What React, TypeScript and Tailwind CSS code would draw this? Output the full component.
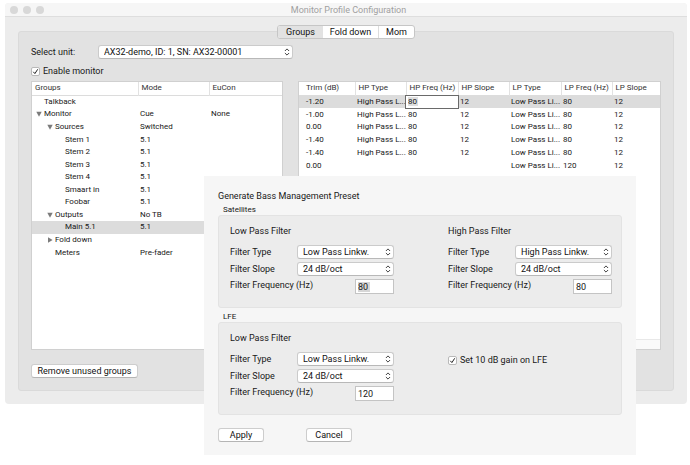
import type { ReactNode } from 'react'

type GroupRow = {
  name: string
  depth: number
  mode?: string
  eucon?: string
  arrow?: 'open' | 'closed'
  selected?: boolean
}

const GROUP_ROWS: GroupRow[] = [
  { name: 'Talkback', depth: 0 },
  { name: 'Monitor', depth: 0, mode: 'Cue', eucon: 'None', arrow: 'open' },
  { name: 'Sources', depth: 1, mode: 'Switched', arrow: 'open' },
  { name: 'Stem 1', depth: 2, mode: '5.1' },
  { name: 'Stem 2', depth: 2, mode: '5.1' },
  { name: 'Stem 3', depth: 2, mode: '5.1' },
  { name: 'Stem 4', depth: 2, mode: '5.1' },
  { name: 'Smaart in', depth: 2, mode: '5.1' },
  { name: 'Foobar', depth: 2, mode: '5.1' },
  { name: 'Outputs', depth: 1, mode: 'No TB', arrow: 'open' },
  { name: 'Main 5.1', depth: 2, mode: '5.1', selected: true },
  { name: 'Fold down', depth: 1, arrow: 'closed' },
  { name: 'Meters', depth: 1, mode: 'Pre-fader' },
]

const INDENT = ['pl-[4px]', 'pl-[15px]', 'pl-[25px]']

const CHANNEL_HEADERS = [
  'Trim (dB)',
  'HP Type',
  'HP Freq (Hz)',
  'HP Slope',
  'LP Type',
  'LP Freq (Hz)',
  'LP Slope',
]

const CHANNEL_ROWS = [
  ['-1.20', 'High Pass L...', '80', '12', 'Low Pass Li...', '80', '12'],
  ['-1.00', 'High Pass L...', '80', '12', 'Low Pass Li...', '80', '12'],
  ['0.00', 'High Pass L...', '80', '12', 'Low Pass Li...', '80', '12'],
  ['-1.40', 'High Pass L...', '80', '12', 'Low Pass Li...', '80', '12'],
  ['-1.40', 'High Pass L...', '80', '12', 'Low Pass Li...', '80', '12'],
  ['0.00', '', '', '', 'Low Pass Li...', '120', '12'],
]

function Arrow({ kind }: { kind?: 'open' | 'closed' }) {
  return (
    <svg viewBox="0 0 6 6" className="size-[6px] shrink-0 fill-[#7b7b7b]" aria-hidden="true">
      {kind === 'open' && <path d="M0.3 0.8h5.4L3 5.8z" />}
      {kind === 'closed' && <path d="M1 0.3v5.4L5.6 3z" />}
    </svg>
  )
}

function Select({ id, value, className }: { id: string; value: string; className: string }) {
  return (
    <div className={`relative shrink-0 ${className}`}>
      <select
        id={id}
        defaultValue={value}
        className="block h-[14px] w-full appearance-none rounded-[3px] border border-[#cbcbcb] border-b-[#b8b8b8] bg-white pr-4 pl-[5px] leading-[12px] text-[#111]"
      >
        <option>{value}</option>
      </select>
      <svg
        viewBox="0 0 6 8"
        className="pointer-events-none absolute top-[3px] right-[3px] h-2 w-[6px] fill-none stroke-[#444]"
        aria-hidden="true"
      >
        <path d="M0.9 3L3 0.9L5.1 3M0.9 5L3 7.1L5.1 5" />
      </svg>
    </div>
  )
}

function Checkbox({ id, children }: { id: string; children: ReactNode }) {
  return (
    <div className="flex items-center gap-[3px]">
      <span className="relative size-[9px]">
        <input
          id={id}
          type="checkbox"
          defaultChecked
          className="peer block size-[9px] appearance-none rounded-[2px] border border-[#b9b9b9] bg-white"
        />
        <svg
          viewBox="0 0 9 9"
          className="pointer-events-none absolute inset-0 hidden size-[9px] fill-none stroke-[#222] peer-checked:block"
          aria-hidden="true"
        >
          <path d="M2.3 4.8L3.9 6.6L6.7 2.3" />
        </svg>
      </span>
      <label htmlFor={id}>{children}</label>
    </div>
  )
}

function Button({ className, children }: { className: string; children: ReactNode }) {
  return (
    <button
      type="button"
      className={`h-[14px] rounded-[3px] border border-[#cdcdcd] border-b-[#b5b5b5] bg-white leading-[12px] text-[#111] ${className}`}
    >
      {children}
    </button>
  )
}

function GroupsTable() {
  return (
    <div className="w-[252px] shrink-0 border border-[#d0d0d0] bg-white">
      <table className="h-[177px] w-full table-fixed border-collapse text-left text-[8px] leading-[12px]">
        <colgroup>
          <col className="w-[106px]" />
          <col className="w-[71px]" />
          <col />
        </colgroup>
        <thead>
          <tr className="h-[13px] border-b border-[#dcdcdc] text-[#333]">
            <th className="border-r border-[#e2e2e2] py-0 pl-[3px] font-normal">Groups</th>
            <th className="border-r border-[#e2e2e2] py-0 pl-[3px] font-normal">Mode</th>
            <th className="py-0 pl-[3px] font-normal">EuCon</th>
          </tr>
        </thead>
        <tbody>
          {GROUP_ROWS.map((row) => (
            <tr key={row.name} className={row.selected ? 'bg-[#dcdcdc]' : ''}>
              <td className="p-0">
                <div className={`flex items-center gap-[2px] ${INDENT[row.depth]}`}>
                  <Arrow kind={row.arrow} />
                  {row.name}
                </div>
              </td>
              <td className="py-0 pl-[2px]">{row.mode}</td>
              <td className="py-0 pl-[2px]">{row.eucon}</td>
            </tr>
          ))}
        </tbody>
      </table>
    </div>
  )
}

function ChannelsTable() {
  return (
    <div className="flex min-w-0 flex-1 flex-col border border-[#d0d0d0] bg-white">
      <table className="h-[90px] w-full table-fixed border-collapse text-left text-[8px] leading-[12px]">
        <colgroup>
          <col className="w-[56px]" />
          <col className="w-[51px]" />
          <col className="w-[52px]" />
          <col className="w-[51px]" />
          <col className="w-[52px]" />
          <col className="w-[51px]" />
          <col />
        </colgroup>
        <thead>
          <tr className="h-[13px] border-b border-[#dcdcdc] text-[#333]">
            {CHANNEL_HEADERS.map((title) => (
              <th
                key={title}
                className="border-r border-[#e2e2e2] py-0 pr-0 pl-[3px] font-normal whitespace-nowrap first:pl-[7px] last:border-r-0"
              >
                {title}
              </th>
            ))}
          </tr>
        </thead>
        <tbody>
          {CHANNEL_ROWS.map((row, r) => (
            <tr key={r} className={r === 0 ? 'bg-[#dcdcdc]' : ''}>
              {row.map((cell, c) =>
                r === 0 && c === 2 ? (
                  <td key={c} className="p-0">
                    <input
                      aria-label="HP Freq (Hz)"
                      defaultValue={cell}
                      className="block h-[12px] w-full bg-white bg-[linear-gradient(#dedede,#dedede)] bg-[length:10px_9px] bg-[position:2px_1px] bg-no-repeat pl-[2px] leading-[12px] outline outline-[#6a6a6a]"
                    />
                  </td>
                ) : (
                  <td key={c} className="py-0 pr-0 pl-[2px] whitespace-nowrap first:pl-[7px]">
                    {cell}
                  </td>
                ),
              )}
            </tr>
          ))}
        </tbody>
      </table>
      {/* Horizontal scroll track */}
      <div className="mt-auto h-[10px] border-t border-[#e8e8e8] bg-[#fafafa]" />
    </div>
  )
}

type FilterProps = {
  id: string
  title: string
  type: string
  frequency: string
  highlighted?: boolean
}

function FilterForm({ id, title, type, frequency, highlighted }: FilterProps) {
  const highlight = highlighted
    ? 'bg-[linear-gradient(#d6d6d6,#d6d6d6)] bg-[length:12px_10px] bg-[position:2px_2px] bg-no-repeat'
    : ''
  return (
    <div className="w-[164px] shrink-0">
      <h3 className="leading-[12px]">{title}</h3>
      <div className="mt-[8px] flex flex-col gap-[3px]">
        <div className="flex items-center justify-between">
          <label htmlFor={`${id}-type`}>Filter Type</label>
          <Select id={`${id}-type`} value={type} className="w-[97px]" />
        </div>
        <div className="flex items-center justify-between">
          <label htmlFor={`${id}-slope`}>Filter Slope</label>
          <Select id={`${id}-slope`} value="24 dB/oct" className="w-[97px]" />
        </div>
        <div className="flex items-start justify-between">
          <label htmlFor={`${id}-freq`}>Filter Frequency (Hz)</label>
          <input
            id={`${id}-freq`}
            defaultValue={frequency}
            className={`h-[15px] w-[39px] border border-[#c4c4c4] bg-white pl-[2px] leading-[13px] ${highlight}`}
          />
        </div>
      </div>
    </div>
  )
}

function BassManagementDialog() {
  return (
    <section
      role="dialog"
      aria-labelledby="bass-title"
      className="absolute top-[176px] right-[54px] left-[204px] bg-[#f6f6f6] px-[14px] pt-[14px] pb-[13px]"
    >
      <h2 id="bass-title" className="leading-[12px]">
        Generate Bass Management Preset
      </h2>
      <h3 className="mt-[3px] pl-[5px] text-[8px] leading-[10px]">Satellites</h3>
      <div className="flex h-[93px] gap-[54px] rounded-[3px] border border-[#e3e3e3] bg-[#ececec] px-[11px] pt-[9px]">
        <FilterForm id="sat-lp" title="Low Pass Filter" type="Low Pass Linkw." frequency="80" highlighted />
        <FilterForm id="sat-hp" title="High Pass Filter" type="High Pass Linkw." frequency="80" />
      </div>
      <h3 className="mt-[4px] pl-[5px] text-[8px] leading-[10px]">LFE</h3>
      <div className="flex h-[93px] gap-[54px] rounded-[3px] border border-[#e3e3e3] bg-[#ececec] px-[11px] pt-[9px]">
        <FilterForm id="lfe-lp" title="Low Pass Filter" type="Low Pass Linkw." frequency="120" />
        <div className="pt-[22px]">
          <Checkbox id="lfe-gain">Set 10 dB gain on LFE</Checkbox>
        </div>
      </div>
      <div className="mt-[13px] flex gap-[42px]">
        <Button className="w-[46px]">Apply</Button>
        <Button className="w-[46px]">Cancel</Button>
      </div>
    </section>
  )
}

export default function App() {
  return (
    <div className="relative min-h-screen bg-white pt-[3px] pr-[3px] pl-[5px] font-[Roboto,'Liberation_Sans',sans-serif] text-[9px] leading-[12px] text-[#181818]">
      <main className="rounded-[4px] bg-[#ececec] pb-[13px]">
        <header className="flex h-[14px] items-center rounded-t-[4px] border-b border-[#dedede] bg-[#f6f6f6]">
          <div className="flex flex-1 gap-[5px] pl-[5px]">
            <span className="size-[8px] rounded-full bg-[#d8d8d8]" />
            <span className="size-[8px] rounded-full bg-[#d8d8d8]" />
            <span className="size-[8px] rounded-full bg-[#d8d8d8]" />
          </div>
          <h1 className="text-[#a0a0a0]">Monitor Profile Configuration</h1>
          <div className="flex-1" />
        </header>

        {/* The tab bar straddles the top edge of the panel */}
        <div className="relative z-10 mt-[8px] flex justify-center">
          <div className="flex h-[14px] overflow-hidden rounded-[3px] border border-[#c6c6c6] bg-white leading-[12px] text-[#111]">
            <button type="button" className="w-[45px] bg-[#e2e2e2]">
              Groups
            </button>
            <button type="button" className="w-[55px]">
              Fold down
            </button>
            <button type="button" className="w-[36px] border-l border-[#dcdcdc]">
              Mom
            </button>
          </div>
        </div>

        <div className="mx-[13px] -mt-[8px] rounded-[3px] border border-[#dadada] bg-[#e2e2e2] px-[12px] pt-[13px] pb-[12px]">
          <div className="flex items-center">
            <label htmlFor="unit" className="w-[67px]">
              Select unit:
            </label>
            <Select id="unit" value="AX32-demo, ID: 1, SN: AX32-00001" className="w-[195px]" />
          </div>
          <div className="mt-[6px]">
            <Checkbox id="enable">Enable monitor</Checkbox>
          </div>
          <div className="mt-[4px] flex h-[269px] gap-[15px]">
            <GroupsTable />
            <ChannelsTable />
          </div>
          <Button className="mt-[14px] w-[107px]">Remove unused groups</Button>
        </div>
      </main>

      <BassManagementDialog />
    </div>
  )
}
